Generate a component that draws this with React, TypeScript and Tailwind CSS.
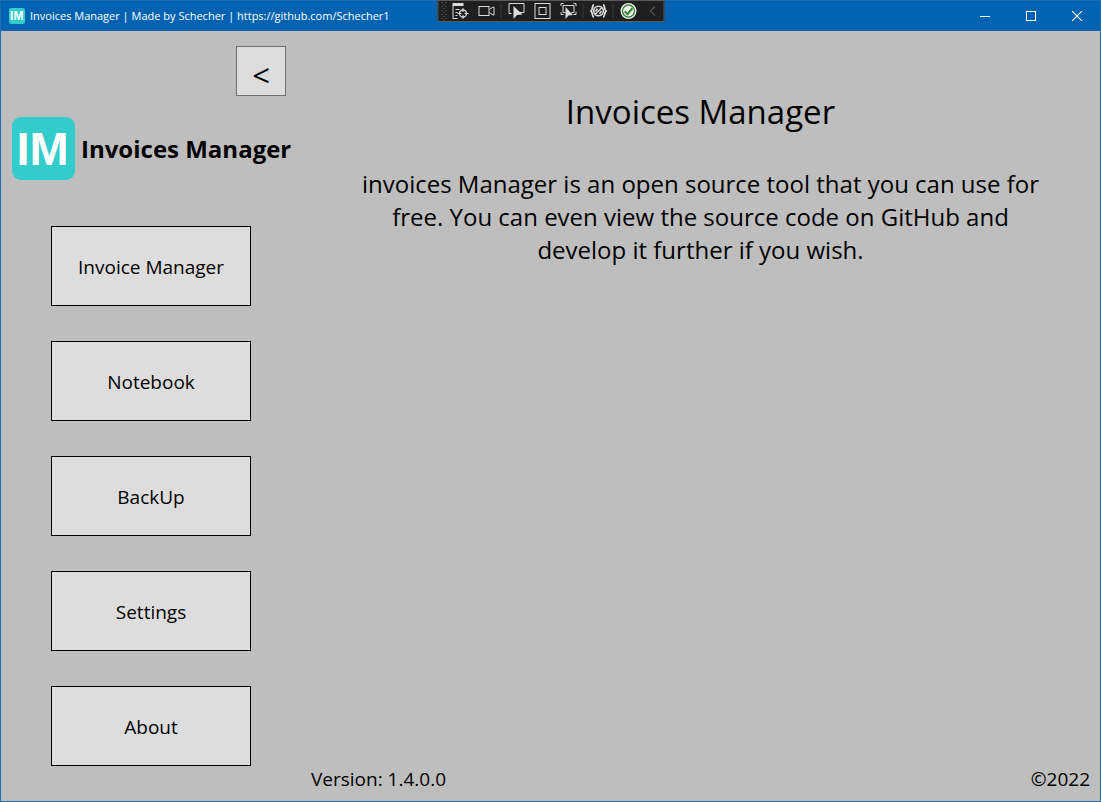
import { useState } from "react";
import type { ReactNode } from "react";

const pages = ["Invoice Manager", "Notebook", "BackUp", "Settings", "About"];

function ToolButton({ label, children }: { label: string; children: ReactNode }) {
  return (
    <button type="button" aria-label={label} className="flex h-5 w-[26px] items-center justify-center">
      <svg width="18" height="18" viewBox="0 0 18 18" fill="none" stroke="#dcdcdc" strokeWidth="1">
        {children}
      </svg>
    </button>
  );
}

function Separator() {
  return <span className="mr-[2px] ml-px h-[14px] w-px bg-[#3d3d40]" />;
}

function DebugToolbar() {
  return (
    <div className="absolute -top-px left-1/2 flex h-[22px] w-[227px] -translate-x-1/2 items-center border border-[#5b5b5b] bg-[#1f1f1f]">
      <svg width="9" height="20" viewBox="1 0 9 20" fill="#6a6a6a" aria-hidden="true">
        {[1, 5, 9, 13, 17].map((y) => (
          <g key={y}>
            <rect x="4" y={y} width="1" height="1" />
            <rect x="8" y={y} width="1" height="1" />
            <rect x="6" y={y + 2} width="1" height="1" />
          </g>
        ))}
      </svg>
      <ToolButton label="Go to Live Visual Tree">
        <rect x="1" y="1" width="11" height="3" fill="#dcdcdc" stroke="none" />
        <path d="M1.5 4v12M1 16.5h5M4 7.5h4M4 10.5h2M4 13.5h2" />
        <circle cx="11.5" cy="11.5" r="3.5" strokeWidth="1.3" />
        <path d="M11.5 6v4M11.5 13v4M6 11.5h4M13 11.5h4" />
      </ToolButton>
      <ToolButton label="Show in XAML Live Preview">
        <rect x="1.5" y="4.5" width="10" height="9" />
        <path d="M12 7.5l3.5-2.500h1v8h-1l-3.500-2.500" />
      </ToolButton>
      <Separator />
      <ToolButton label="Select Element">
        <path d="M4 11.5H1.5V1.5h15v9H12" />
        <path d="M6 4v13l3.500-4 5.500-.5z" fill="#dcdcdc" stroke="none" />
      </ToolButton>
      <ToolButton label="Display Layout Adorners">
        <rect x="1.5" y="1.5" width="15" height="15" />
        <rect x="5.5" y="5.5" width="7" height="7" />
      </ToolButton>
      <ToolButton label="Track Focused Element">
        <path d="M1.5 4V1.5H4M14 1.5h2.500V4M1.5 10v2.500H4M14 12.500h2.500V10M6 10.500H3.500v-7h11v7H12" />
        <path d="M6 5v12l3-3.500 4.500-.5z" fill="#dcdcdc" stroke="none" />
      </ToolButton>
      <Separator />
      <ToolButton label="Binding Failures">
        <path
          d="M4.500 3C2.500 3 3.500 7.500 1.500 9c2 1.500 1 6 3 6M13.500 3c2 0 1 4.500 3 6-2 1.500-1 6-3 6"
          strokeWidth="1.800"
        />
        <circle cx="9" cy="9" r="4.800" strokeWidth="1.600" />
        <path d="M5.500 12.500l7-7M8 6.500l-2 3M12 9l-2 3" strokeWidth="1.500" />
      </ToolButton>
      <Separator />
      <ToolButton label="Hot Reload">
        <circle cx="9" cy="9" r="7.300" fill="#f1f1f1" stroke="#f1f1f1" strokeWidth="1.400" />
        <circle cx="9" cy="9" r="6" fill="#f1f1f1" stroke="#388a34" strokeWidth="1.400" />
        <path d="M5.200 9.200l2.900 3L12.800 6.200" stroke="#388a34" strokeWidth="2.200" />
      </ToolButton>
      <button type="button" aria-label="Collapse toolbar" className="flex h-5 flex-1 items-center justify-center">
        <svg width="6" height="10" viewBox="0 0 6 10" fill="none" stroke="#707070">
          <path d="M5.500 .5L.8 5l4.700 4.500" />
        </svg>
      </button>
    </div>
  );
}

function TitleBar() {
  return (
    <header className="flex h-[30px] items-center bg-[#0063b1] text-white">
      <svg className="ml-2" width="16" height="16" viewBox="0 0 63 63" aria-hidden="true">
        <LogoMark />
      </svg>
      <span className="ml-[5px] text-[11px] leading-4 whitespace-nowrap">
        Invoices Manager | Made by Schecher | https://github.com/Schecher1
      </span>
      <div className="ml-auto flex h-full">
        <button type="button" aria-label="Minimize" className="flex w-[46px] items-center justify-center">
          <svg width="10" height="10" viewBox="0 0 10 10" stroke="#fff">
            <path d="M0 5.500h10" />
          </svg>
        </button>
        <button type="button" aria-label="Maximize" className="flex w-[46px] items-center justify-center">
          <svg width="10" height="10" viewBox="0 0 10 10" fill="none" stroke="#fff">
            <rect x=".5" y=".5" width="9" height="9" />
          </svg>
        </button>
        <button type="button" aria-label="Close" className="flex w-[46px] items-center justify-center">
          <svg width="10" height="10" viewBox="0 0 10 10" stroke="#fff" strokeWidth="1.100">
            <path d="M0 0l10 10M10 0L0 10" />
          </svg>
        </button>
      </div>
    </header>
  );
}

function LogoMark() {
  return (
    <>
      <rect width="63" height="63" rx="9" fill="#33cccc" />
      <text x="30.5" y="48" textAnchor="middle" fill="#fff" fontFamily="Liberation Sans, sans-serif" fontSize="47" fontWeight="700">
        IM
      </text>
    </>
  );
}

export default function App() {
  const [open, setOpen] = useState(true);

  return (
    <div className="relative flex min-h-screen flex-col border border-[#1a6fb5] bg-[#bebebe] font-['Open_Sans',sans-serif] text-black">
      <TitleBar />
      <DebugToolbar />
      <div className="flex flex-1">
        <aside className={open ? "flex w-[300px] shrink-0 flex-col pt-[15px] pb-[35px]" : "flex w-20 shrink-0 flex-col pt-[15px]"}>
          <button
            type="button"
            aria-label="Toggle menu"
            onClick={() => setOpen(!open)}
            className="mr-[15px] flex size-[50px] items-center justify-center self-end border border-[#707070] bg-[#dddddd] pt-2 text-[31px] leading-8"
          >
            {open ? "<" : ">"}
          </button>
          {open && (
            <>
              <div className="mt-[21px] ml-[11px] flex items-center gap-[6px]">
                <svg className="shrink-0" width="63" height="63" viewBox="0 0 63 63" aria-hidden="true">
                  <LogoMark />
                </svg>
                <span className="text-[24px] leading-8 font-bold whitespace-nowrap">Invoices Manager</span>
              </div>
              <nav className="mt-[46px] flex flex-col gap-[35px] px-[50px]">
                {pages.map((page) => (
                  <button key={page} type="button" className="h-20 border border-black bg-[#dddddd] pt-[2px] text-[19px] leading-7">
                    {page}
                  </button>
                ))}
              </nav>
            </>
          )}
        </aside>
        <main className="flex flex-1 flex-col">
          <div className="px-14 pt-14 text-center">
            <h1 className="text-[33px] leading-[50px]">Invoices Manager</h1>
            <p className="mt-[30px] text-[24px] leading-[33px]">
              invoices Manager is an open source tool that you can use for free. You can even view the source code on
              GitHub and develop it further if you wish.
            </p>
          </div>
          <footer className="mt-auto flex justify-between px-[10px] pb-2 text-[19px] leading-7">
            <span>Version: 1.4.0.0</span>
            <span>©2022</span>
          </footer>
        </main>
      </div>
    </div>
  );
}
